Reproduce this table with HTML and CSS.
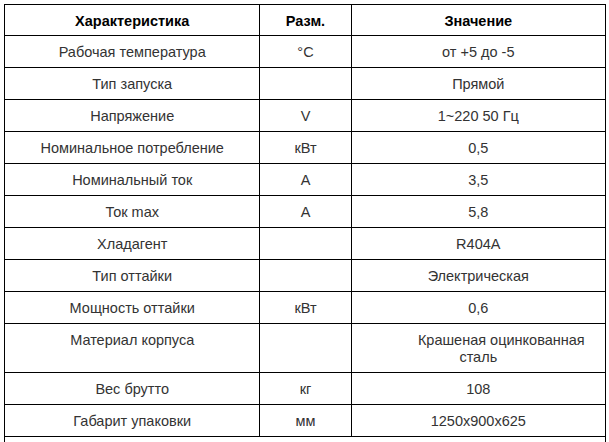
FILE: index.html
```html
<!DOCTYPE html>
<html lang="ru">
<head>
<meta charset="utf-8">
<title>Характеристики</title>
<link rel="stylesheet" href="styles.css">
</head>
<body>
<table class="specs">
  <colgroup>
    <col class="c-name">
    <col class="c-unit">
    <col class="c-value">
  </colgroup>
  <thead>
    <tr><th>Характеристика</th><th>Разм.</th><th>Значение</th></tr>
  </thead>
  <tbody>
    <tr><td>Рабочая температура</td><td>°C</td><td>от +5 до -5</td></tr>
    <tr><td>Тип запуска</td><td></td><td>Прямой</td></tr>
    <tr><td>Напряжение</td><td>V</td><td>1~220 50 Гц</td></tr>
    <tr><td>Номинальное потребление</td><td>кВт</td><td>0,5</td></tr>
    <tr><td>Номинальный ток</td><td>А</td><td>3,5</td></tr>
    <tr><td>Ток max</td><td>А</td><td>5,8</td></tr>
    <tr><td>Хладагент</td><td></td><td>R404A</td></tr>
    <tr><td>Тип оттайки</td><td></td><td>Электрическая</td></tr>
    <tr><td>Мощность оттайки</td><td>кВт</td><td>0,6</td></tr>
    <tr class="tall"><td>Материал корпуса</td><td></td><td class="indent">Крашеная оцинкованная<br>сталь</td></tr>
    <tr><td>Вес брутто</td><td>кг</td><td>108</td></tr>
    <tr><td>Габарит упаковки</td><td>мм</td><td>1250x900x625</td></tr>
    <tr class="empty"><td colspan="3"></td></tr>
  </tbody>
</table>
</body>
</html>
```

FILE: styles.css
```css
html, body {
  margin: 0;
  padding: 0;
  background: #fff;
}
body {
  padding: 4px;
  font-family: "Liberation Sans", Arial, sans-serif;
  font-size: 14.5px;
  color: #333;
}
.specs {
  border-collapse: separate;
  border-spacing: 0;
  border-top: 1px solid #000;
  border-left: 1px solid #000;
  table-layout: fixed;
  width: 602px;
}
.c-name { width: 255px; }
.c-unit { width: 91px; }
.c-value { width: 254px; }
.specs th,
.specs td {
  border-right: 1px solid #000;
  border-bottom: 1px solid #000;
  padding: 8px 0 6px;
  line-height: 17px;
  height: 17px;
  text-align: center;
  vertical-align: top;
  font-weight: normal;
}
.specs th {
  color: #000;
  font-weight: bold;
  padding-bottom: 5px;
}
.specs .tall td {
  height: 33px;
}
.specs td.indent {
  text-indent: 46px;
}
.specs .empty td {
  height: 17px;
}
```
